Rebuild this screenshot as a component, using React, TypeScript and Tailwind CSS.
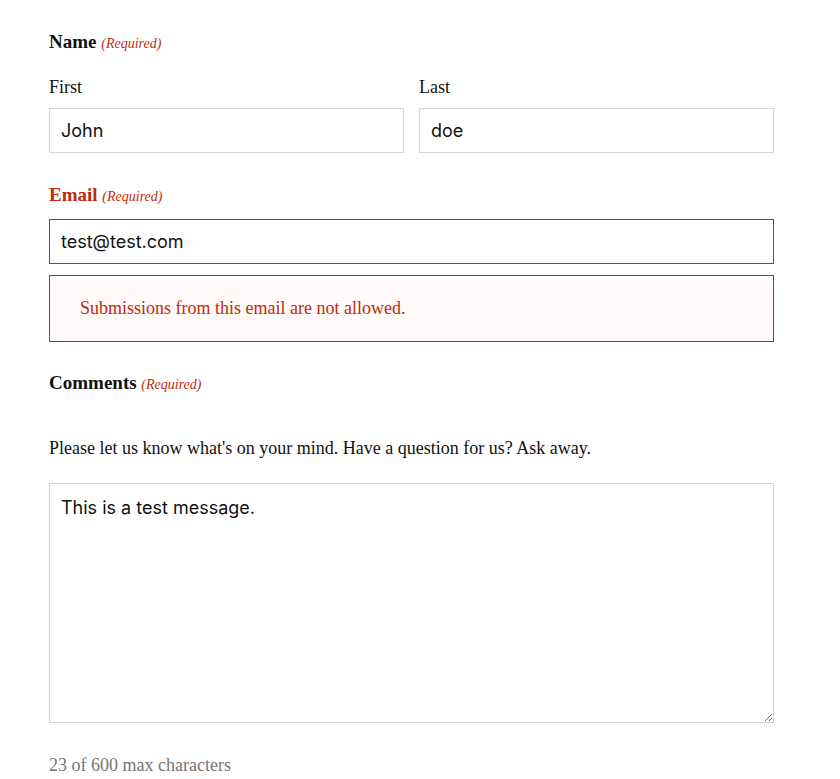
import React from 'react';

const serif = "font-['Liberation_Serif',serif]";
const sans = "font-['Inter','Liberation_Sans',sans-serif]";

const Required = () => (
    <span className="text-[14px] font-normal italic text-[#c02b0a]">(Required)</span>
);

const App = () => {
    return (
        <div className={`min-h-screen bg-white ${serif} text-[#111]`}>
            <div className="w-[725px] ml-[49px] pt-[30px]">
                {/* Name */}
                <fieldset>
                    <legend className="text-[19px] font-bold leading-6">
                        Name <Required />
                    </legend>
                    <div className="mt-[21px] flex gap-[15px]">
                        <div className="flex-1">
                            <label className="block text-[18px] leading-5">First</label>
                            <input
                                defaultValue="John"
                                className={`mt-[11px] h-[45px] w-full border border-[#dcd6c9] px-[11px] text-[18px] ${sans} outline-none`}
                            />
                        </div>
                        <div className="flex-1">
                            <label className="block text-[18px] leading-5">Last</label>
                            <input
                                defaultValue="doe"
                                className={`mt-[11px] h-[45px] w-full border border-[#dcd6c9] px-[11px] text-[18px] ${sans} outline-none`}
                            />
                        </div>
                    </div>
                </fieldset>

                {/* Email */}
                <div className="mt-[30px]">
                    <label className="block text-[19px] font-bold leading-6 text-[#c02b0a]">
                        Email <Required />
                    </label>
                    <input
                        defaultValue="test@test.com"
                        className={`mt-[10px] h-[45px] w-full border border-[#c02b0a] px-[11px] text-[18px] ${sans} outline-none`}
                    />
                    <div className="mt-[11px] h-[67px] border border-[#c02b0a] bg-[#fff9f9] pl-[30px] flex items-center text-[18px] text-[#c02b0a]">
                        Submissions from this email are not allowed.
                    </div>
                </div>

                {/* Comments */}
                <div className="mt-[29px]">
                    <label className="block text-[19px] font-bold leading-6">
                        Comments <Required />
                    </label>
                    <p className="mt-[41px] text-[18px] leading-5">
                        Please let us know what's on your mind. Have a question for us? Ask away.
                    </p>
                    <textarea
                        defaultValue="This is a test message."
                        className={`mt-[25px] block h-[240px] w-full border border-[#dcd6c9] px-[11px] py-[10px] text-[18px] ${sans} outline-none`}
                    />
                    <div className="mt-[30px] text-[18px] leading-6 text-[#767676]">23 of 600 max characters</div>
                </div>
            </div>
        </div>
    );
};

export default App;
